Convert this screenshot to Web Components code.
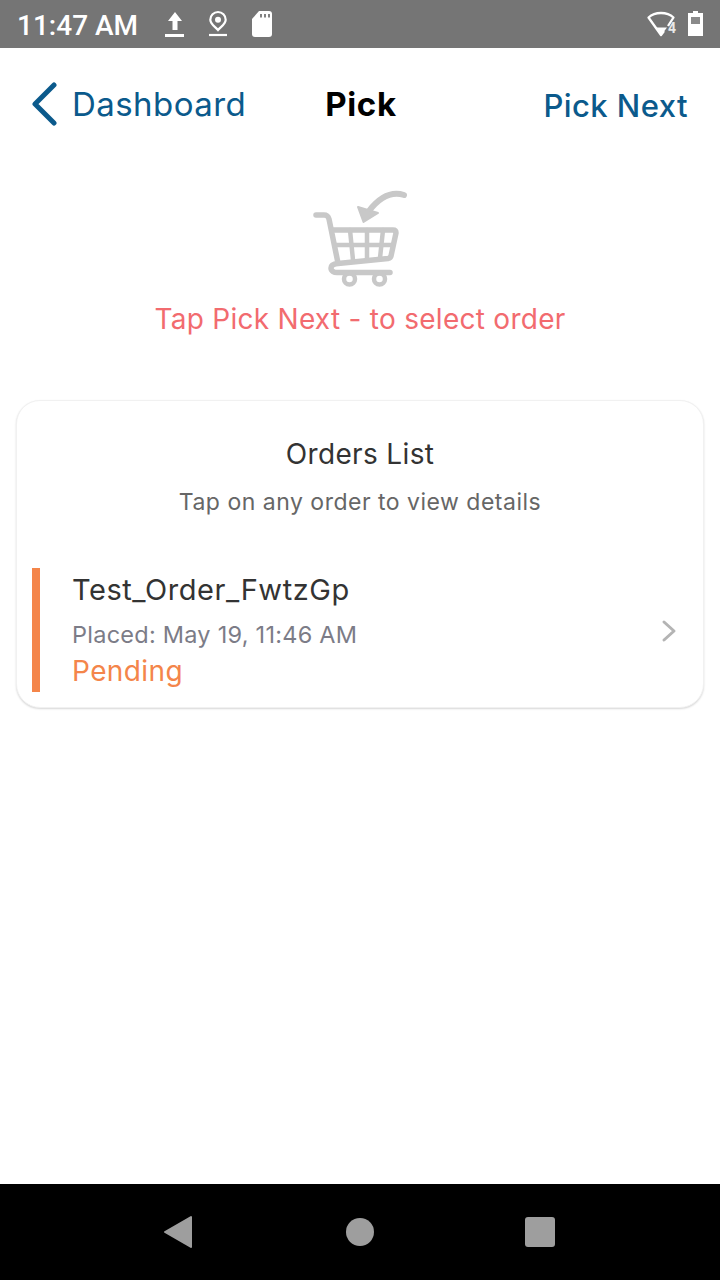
<!DOCTYPE html>
<html lang="en">
<head>
<meta charset="UTF-8">
<title>Pick</title>
<style>
  html, body { margin: 0; padding: 0; background: #fff; }
  body { width: 720px; height: 1280px; font-family: Inter, "Liberation Sans", sans-serif; }
  app-screen { height: 1280px; }
</style>
</head>
<body>
<app-screen>
  <status-bar slot="top"></status-bar>
  <nav-header slot="top" back="Dashboard" title="Pick" action="Pick Next"></nav-header>
  <pick-hint>Tap Pick Next - to select order</pick-hint>
  <orders-card heading="Orders List" sub="Tap on any order to view details">
    <order-row name="Test_Order_FwtzGp" placed="Placed: May 19, 11:46 AM" status="Pending"></order-row>
  </orders-card>
  <android-nav slot="bottom"></android-nav>
</app-screen>
<script>
  class AppScreen extends HTMLElement {
    connectedCallback() {
      const root = this.attachShadow({mode: 'open'});
      root.innerHTML = `
      <style>
        :host { display: flex; flex-direction: column; width: 720px; }
        main { flex: 1; display: flex; flex-direction: column; }
      </style>
      <slot name="top"></slot>
      <main><slot></slot></main>
      <slot name="bottom"></slot>`;
    }
  }

  class StatusBar extends HTMLElement {
    connectedCallback() {
      const root = this.attachShadow({mode: 'open'});
      root.innerHTML = `
      <style>
        :host { display: flex; align-items: center; height: 48px; background: #757575; color: #fff; padding: 0 16px 0 17px; box-sizing: border-box; font: 500 28px Roboto, sans-serif; }
        .time { width: 147px; margin-top: 2px; }
        .left { display: flex; gap: 22px; align-items: center; }
        .spacer { flex: 1; }
        svg { display: block; }
      </style>
      <span class="time">11:47 AM</span>
      <div class="left">
        <svg width="22" height="28" viewBox="0 0 22 28" fill="#fff"><path d="M11 2 18 11H13.500V20H8.500V11H4Z"/><rect x="1" y="24" width="19" height="3"/></svg>
        <svg width="22" height="28" viewBox="0 0 22 28" fill="none" stroke="#fff" stroke-width="2.200"><path d="M10 20C6.500 16 2.300 14 2.300 9.700A7.700 7.700 0 0 1 17.700 9.700C17.700 14 13.500 16 10 20Z"/><circle cx="10" cy="9.700" r="3" fill="#fff" stroke="none"/><path d="M1 25H19"/></svg>
        <svg width="20" height="28" viewBox="0 0 20 28" fill="#fff"><path d="M7 1H17A3 3 0 0 1 20 4V24A3 3 0 0 1 17 27H3A3 3 0 0 1 0 24V9Z"/><path d="M9 4v3.500M13 4v3.500M17 4v3.500" stroke="#757575" stroke-width="1.800"/></svg>
      </div>
      <div class="spacer"></div>
      <svg width="60" height="28" viewBox="0 0 60 28" fill="none">
        <path d="M24 16 29.500 7.500C23 1.500 11 1.500 4.500 7.500L17 25 20 21" stroke="#fff" stroke-width="2.300" stroke-linejoin="round"/>
        <path d="M11 17.500H23L17 25.500Z" fill="#fff"/>
        <text x="24" y="23" font-family="Roboto, sans-serif" font-size="14" font-weight="700" fill="#e8e8e8">4</text>
        <path d="M49 1H54V3H59V26H44V3H49Z" fill="#fff"/>
        <rect x="47" y="7" width="9" height="7" fill="#8a8a8a"/>
      </svg>`;
    }
  }

  class NavHeader extends HTMLElement {
    connectedCallback() {
      const root = this.attachShadow({mode: 'open'});
      root.innerHTML = `
      <style>
        :host { display: grid; grid-template-columns: 1fr auto 1fr; align-items: center; height: 112px; padding: 0 32px; box-sizing: border-box; font: 400 33px Inter, sans-serif; color: #0b5a8c; }
        .back { display: flex; align-items: center; gap: 14px; letter-spacing: .45px; }
        svg { display: block; flex: none; }
        .title { font-weight: 700; color: #000; letter-spacing: .6px; margin-left: 2px; }
        .action { justify-self: end; font-weight: 500; font-size: 31px; margin-top: 3px; letter-spacing: .45px; }
      </style>
      <div class="back">
        <svg width="26" height="44" viewBox="0 0 26 44" fill="none" stroke="#0b5a8c" stroke-width="5" stroke-linecap="round" stroke-linejoin="round"><path d="M22 3 3 22 22 41"/></svg>
        <span>${this.getAttribute('back')}</span>
      </div>
      <div class="title">${this.getAttribute('title')}</div>
      <div class="action">${this.getAttribute('action')}</div>`;
    }
  }

  class PickHint extends HTMLElement {
    connectedCallback() {
      const root = this.attachShadow({mode: 'open'});
      root.innerHTML = `
      <style>
        :host { display: flex; flex-direction: column; align-items: center; padding-top: 30px; height: 240px; box-sizing: border-box; color: #f26b6f; font: 400 28px Inter, sans-serif; letter-spacing: .27px; }
        svg { display: block; margin-bottom: 12px; }
      </style>
      <svg width="100" height="100" viewBox="310 190 100 100" fill="none" stroke="#c8c8c8" stroke-width="5.500" stroke-linecap="round" stroke-linejoin="round">
        <path d="M316 215H324C327 215 328 216 329 219L338 263"/>
        <path d="M332 230H393C395 230 396 231 396 233L391 256C390.500 258 390 258 388 258.500L338 263.500C333 264 331 266 331 268C331 271 334 272.500 337 272.500H390"/>
        <path d="M335 245H393" stroke-width="4.500"/>
        <path d="M350 230 353 260M367 230V259M383 230 380 258" stroke-width="4.500"/>
        <circle cx="349.500" cy="279" r="5.500" stroke-width="4.500"/>
        <circle cx="379.500" cy="279" r="5.500" stroke-width="4.500"/>
        <path d="M404 195C391 191 379 198 369 211" stroke-width="6"/>
        <path d="M358 207 363.500 222 378 213Z" fill="#c8c8c8" stroke-width="2"/>
      </svg>
      <slot></slot>`;
    }
  }

  class OrdersCard extends HTMLElement {
    connectedCallback() {
      const root = this.attachShadow({mode: 'open'});
      root.innerHTML = `
      <style>
        :host { display: block; margin: 0 16px; height: 308px; box-sizing: border-box; background: #fff; border: 1px solid #f1f1f1; border-radius: 24px; box-shadow: 0 1px 2px rgba(0,0,0,.16); }
        .h { text-align: center; font: 400 28px Inter, sans-serif; color: #333; margin-top: 36px; line-height: 34px; letter-spacing: .35px; }
        .s { text-align: center; font: 400 23px Inter, sans-serif; color: #666; margin-top: 16px; line-height: 30px; margin-bottom: 51px; letter-spacing: .5px; }
      </style>
      <div class="h">${this.getAttribute('heading')}</div>
      <div class="s">${this.getAttribute('sub')}</div>
      <slot></slot>`;
    }
  }

  class OrderRow extends HTMLElement {
    connectedCallback() {
      const root = this.attachShadow({mode: 'open'});
      root.innerHTML = `
      <style>
        :host { display: flex; align-items: center; height: 124px; margin-left: 15px; margin-right: 24px; border-left: 8px solid #f4854a; padding-left: 32px; font-family: Inter, sans-serif; }
        .t { flex: 1; margin-top: -2px; }
        .n { font-size: 29px; line-height: 40px; color: #333; letter-spacing: .55px; }
        .p { font-size: 23.500px; line-height: 30px; color: #7c7c87; margin-top: 10px; letter-spacing: .25px; }
        .st { font-size: 28px; line-height: 34px; color: #f4854a; margin-top: 4px; letter-spacing: .4px; }
        svg { display: block; margin-top: 2px; margin-right: 1px; }
      </style>
      <div class="t">
        <div class="n">${this.getAttribute('name')}</div>
        <div class="p">${this.getAttribute('placed')}</div>
        <div class="st">${this.getAttribute('status')}</div>
      </div>
      <svg width="18" height="24" viewBox="0 0 18 24" fill="none" stroke="#b4b4b4" stroke-width="3" stroke-linecap="round" stroke-linejoin="round"><path d="M4 3 14 12 4 21"/></svg>`;
    }
  }

  class AndroidNav extends HTMLElement {
    connectedCallback() {
      const root = this.attachShadow({mode: 'open'});
      root.innerHTML = `
      <style>
        :host { display: flex; align-items: center; gap: 151px; height: 96px; background: #000; padding-left: 164px; }
        svg { display: block; }
        .back { margin-right: 3px; }
      </style>
      <svg class="back" width="28" height="34" viewBox="0 0 28 34" fill="#9e9e9e" stroke="#9e9e9e" stroke-width="2" stroke-linejoin="round"><path d="M1 17 27 2V32Z"/></svg>
      <svg width="28" height="28" viewBox="0 0 28 28" fill="#9e9e9e"><circle cx="14" cy="14" r="14"/></svg>
      <svg width="30" height="30" viewBox="0 0 30 30" fill="#9e9e9e"><rect width="30" height="30" rx="3"/></svg>`;
    }
  }

  customElements.define('app-screen', AppScreen);
  customElements.define('status-bar', StatusBar);
  customElements.define('nav-header', NavHeader);
  customElements.define('pick-hint', PickHint);
  customElements.define('orders-card', OrdersCard);
  customElements.define('order-row', OrderRow);
  customElements.define('android-nav', AndroidNav);
</script>
</body>
</html>
